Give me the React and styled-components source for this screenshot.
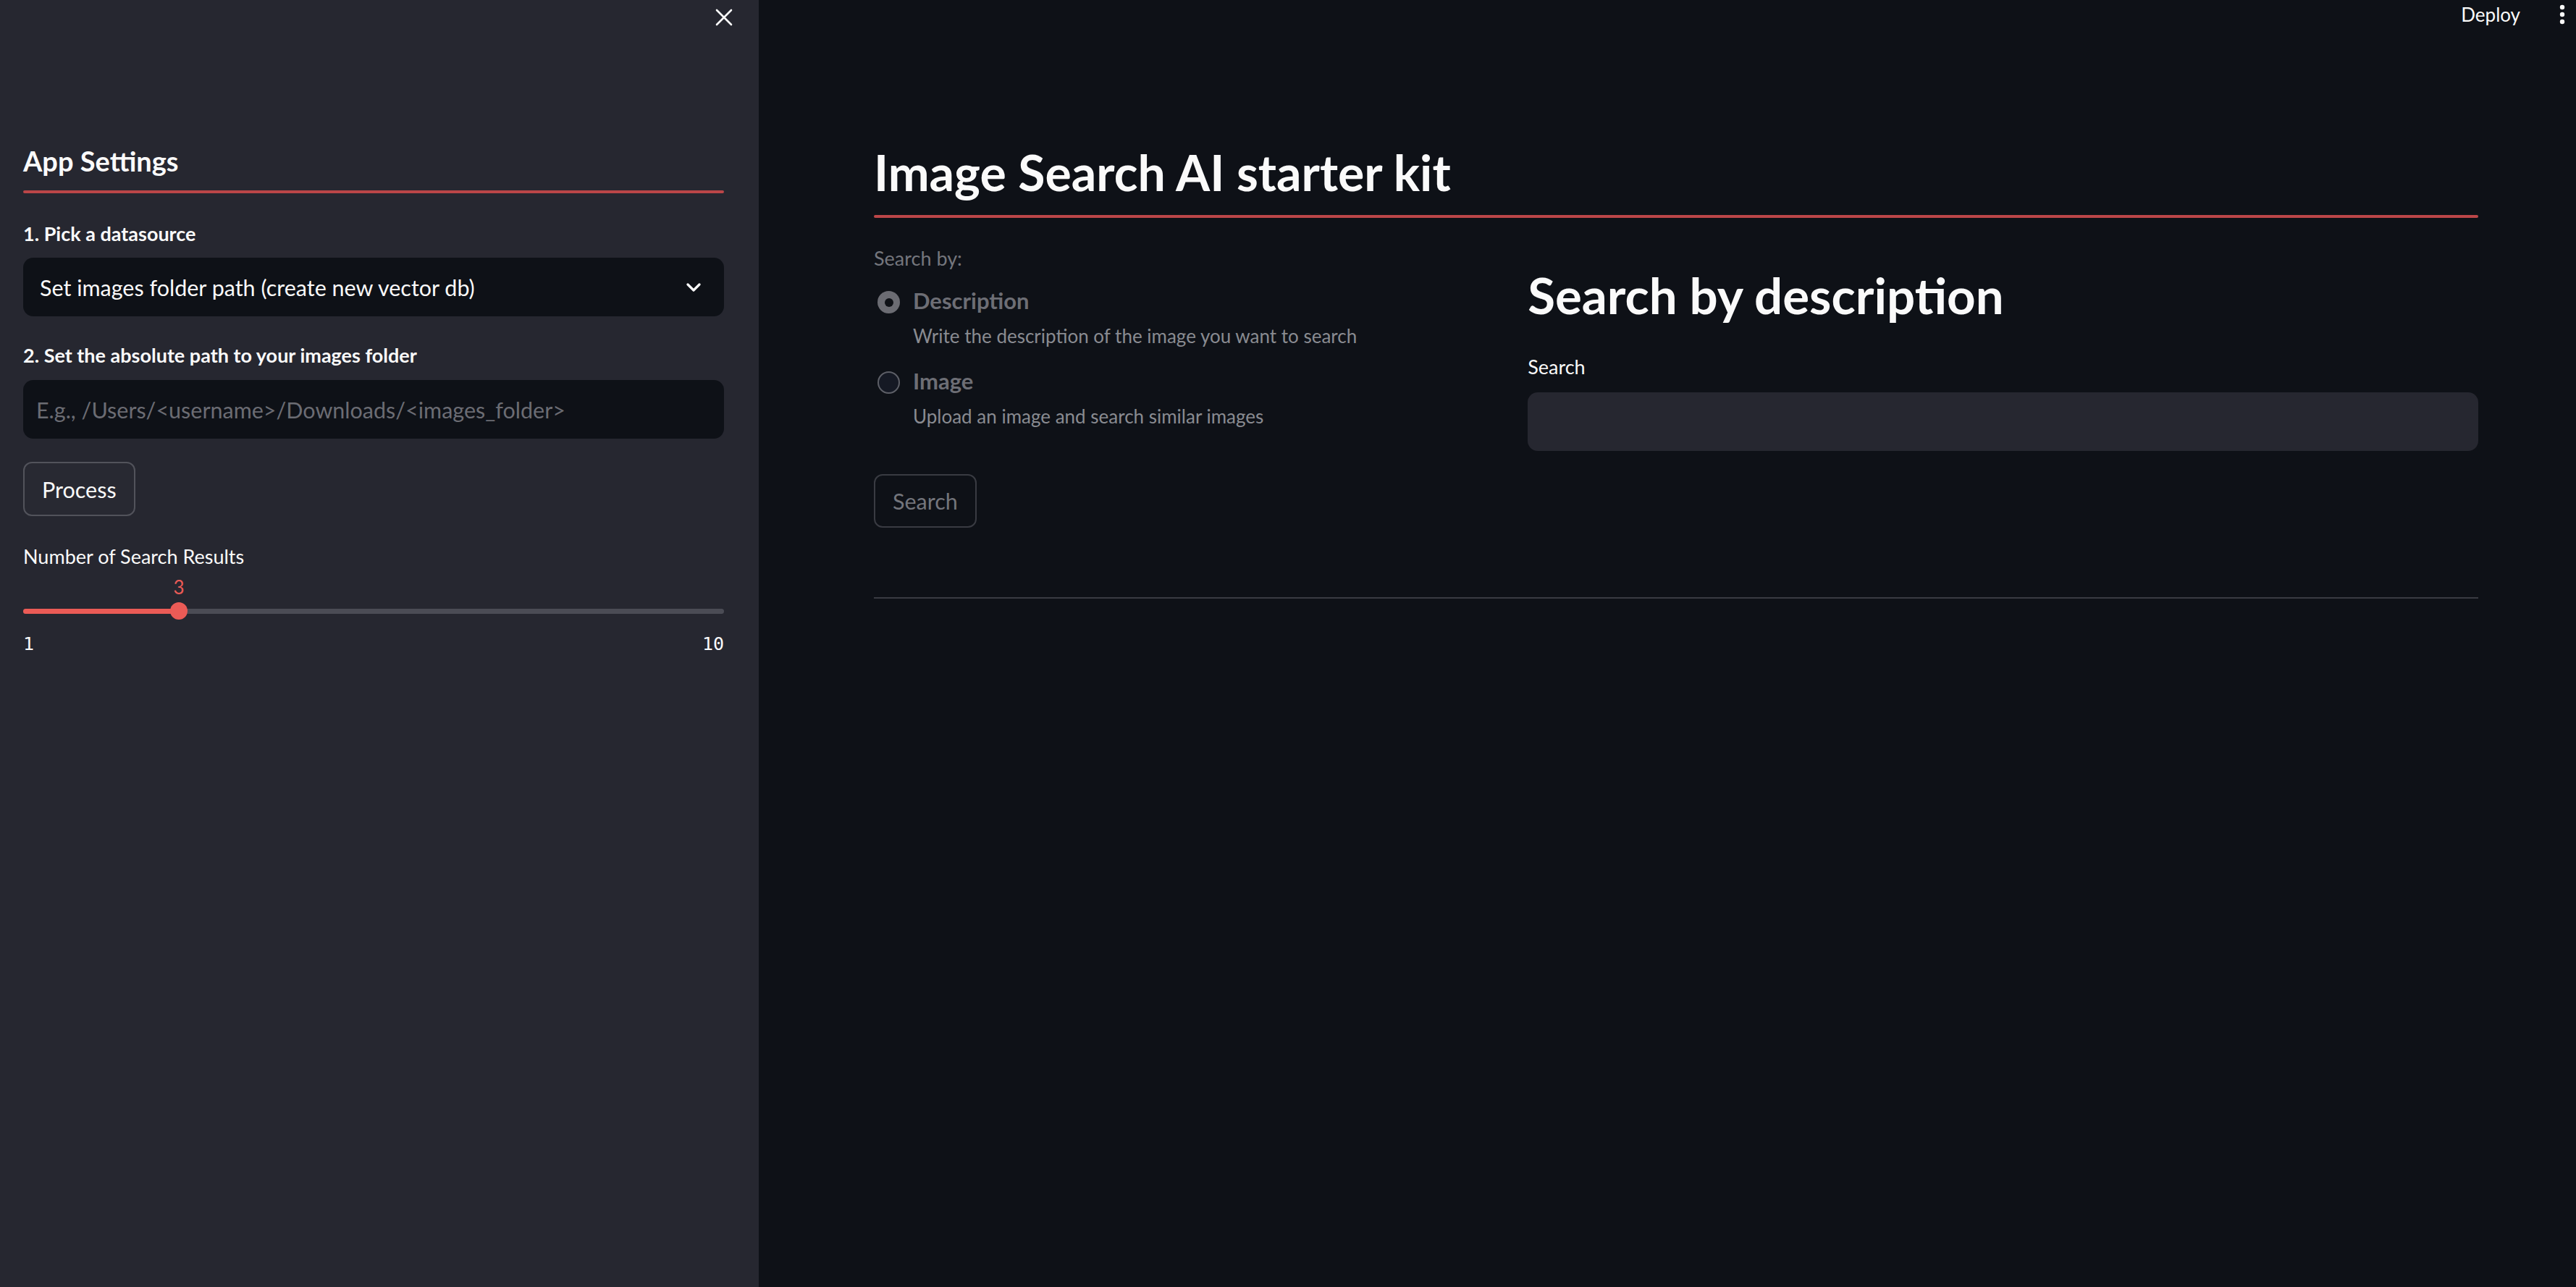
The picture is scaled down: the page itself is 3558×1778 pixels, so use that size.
import React from "react";
import styled, { createGlobalStyle } from "styled-components";

const GlobalStyle = createGlobalStyle`
  html, body {
    margin: 0;
    padding: 0;
    background: #0e1117;
  }
  body {
    font-family: Lato, "Noto Sans", sans-serif;
    color: #fafafa;
  }
  * {
    box-sizing: border-box;
  }
`;

const Layout = styled.div`
  display: flex;
  min-height: 100vh;
`;

const Sidebar = styled.aside`
  width: 1048px;
  flex-shrink: 0;
  background: #262730;
  padding: 0 48px 0 32px;
  display: flex;
  flex-direction: column;
`;

const SidebarTop = styled.div`
  height: 48px;
  display: flex;
  justify-content: flex-end;
  align-items: center;
  margin-right: -12px;
`;

const SideHeading = styled.h2`
  margin: 152px 0 0;
  font-size: 38px;
  line-height: 44px;
  font-weight: 700;
`;

const Divider = styled.div`
  height: 4px;
  border-radius: 2px;
  background: #bb4648;
  margin-top: ${(p) => p.$gap}px;
`;

const FieldLabel = styled.div`
  margin-top: ${(p) => p.$gap}px;
  font-size: 27px;
  line-height: 32px;
  font-weight: ${(p) => (p.$plain ? 400 : 700)};
  color: ${(p) => (p.$muted ? "#74767d" : "#fafafa")};
`;

const Field = styled.div`
  margin-top: ${(p) => p.$gap}px;
  height: 81px;
  border-radius: 14px;
  background: ${(p) => (p.$light ? "#262730" : "#0e1117")};
  display: flex;
  align-items: center;
  justify-content: space-between;
  padding: 0 32px 0 ${(p) => p.$pad || 18}px;
  font-size: 30.5px;
  color: ${(p) => (p.$placeholder ? "#6b6c73" : "#fafafa")};
`;

const Button = styled.button`
  margin-top: ${(p) => p.$gap}px;
  align-self: flex-start;
  height: ${(p) => p.$h}px;
  padding: 0 24px;
  border-radius: 12px;
  font-family: inherit;
  font-size: 30.5px;
  background: ${(p) => (p.$muted ? "#0e1117" : "#282932")};
  border: 2px solid ${(p) => (p.$muted ? "#393b42" : "#52535b")};
  color: ${(p) => (p.$muted ? "#73757c" : "#fafafa")};
`;

const SliderWrap = styled.div`
  margin-top: 10px;
`;

const ValueRow = styled.div`
  position: relative;
  height: 37px;
`;

const ThumbValue = styled.span`
  position: absolute;
  top: 0;
  transform: translateX(-50%);
  font-size: 26px;
  line-height: 32px;
  color: #eb5b56;
`;

const TrackArea = styled.div`
  height: 24px;
  display: flex;
  align-items: center;
`;

const Track = styled.div`
  position: relative;
  width: 100%;
  height: 7px;
  border-radius: 4px;
  background: #4b4c55;
`;

const Fill = styled.div`
  position: absolute;
  left: 0;
  top: 0;
  bottom: 0;
  border-radius: 4px;
  background: #eb5b56;
`;

const Thumb = styled.div`
  position: absolute;
  top: 50%;
  width: 24px;
  height: 24px;
  border-radius: 50%;
  background: #eb5b56;
  transform: translate(-50%, -50%);
`;

const Ticks = styled.div`
  display: flex;
  justify-content: space-between;
  margin-top: 19px;
  font-family: "DejaVu Sans Mono", "Liberation Mono", monospace;
  font-size: 25px;
  line-height: 30px;
`;

const Main = styled.main`
  flex: 1;
  display: flex;
  flex-direction: column;
`;

const TopBar = styled.div`
  height: 40px;
  display: flex;
  justify-content: flex-end;
  align-items: center;
  gap: 54px;
  padding-right: 15px;
  font-size: 26px;
`;

const Content = styled.div`
  padding: 0 135px 0 159px;
  display: flex;
  flex-direction: column;
`;

const Title = styled.h1`
  margin: 156px 0 0;
  font-size: 68px;
  line-height: 84px;
  font-weight: 700;
`;

const Columns = styled.div`
  display: grid;
  grid-template-columns: 2fr 3fr;
  column-gap: 28px;
  align-items: start;
`;

const Column = styled.div`
  display: flex;
  flex-direction: column;
  padding-top: ${(p) => p.$top}px;
`;

const Option = styled.div`
  display: flex;
  gap: 18px;
  margin-top: ${(p) => p.$gap}px;
`;

const RadioDot = styled.span`
  width: 31px;
  height: 31px;
  margin: 5px 0 0 5px;
  flex-shrink: 0;
  border-radius: 50%;
  display: flex;
  align-items: center;
  justify-content: center;
  background: ${(p) => (p.$checked ? "#6b6c73" : "#151924")};
  border: ${(p) => (p.$checked ? "none" : "2px solid #5d5f67")};
  &::after {
    content: "";
    width: 12px;
    height: 12px;
    border-radius: 50%;
    background: #0e1117;
    display: ${(p) => (p.$checked ? "block" : "none")};
  }
`;

const OptionName = styled.div`
  font-size: 31px;
  line-height: 36px;
  font-weight: 700;
  color: #6d6e75;
`;

const OptionHelp = styled.div`
  margin-top: 15px;
  font-size: 26px;
  line-height: 32px;
  color: #898b91;
`;

const SubTitle = styled.h2`
  margin: 0;
  font-size: 69px;
  line-height: 84px;
  font-weight: 700;
`;

const Rule = styled.hr`
  margin: 96px 0 0;
  border: none;
  height: 2px;
  background: #393b42;
`;

function CloseIcon() {
  return (
    <svg width="24" height="24" viewBox="0 0 24 24">
      <path d="M2 2L22 22M22 2L2 22" stroke="#fafafa" strokeWidth="2.6" strokeLinecap="round" />
    </svg>
  );
}

function Chevron() {
  return (
    <svg width="20" height="12" viewBox="0 0 20 12">
      <path d="M2 2L10 10L18 2" stroke="#fafafa" strokeWidth="3.2" fill="none" strokeLinecap="round" strokeLinejoin="round" />
    </svg>
  );
}

function Kebab() {
  return (
    <svg width="8" height="32" viewBox="0 0 8 32">
      <circle cx="4" cy="6" r="3.2" fill="#fafafa" />
      <circle cx="4" cy="16" r="3.2" fill="#fafafa" />
      <circle cx="4" cy="26" r="3.2" fill="#fafafa" />
    </svg>
  );
}

function Slider({ min, max, value }) {
  const pct = ((value - min) / (max - min)) * 100;
  return (
    <SliderWrap>
      <ValueRow>
        <ThumbValue style={{ left: `${pct}%` }}>{value}</ThumbValue>
      </ValueRow>
      <TrackArea>
        <Track>
          <Fill style={{ width: `${pct}%` }} />
          <Thumb style={{ left: `${pct}%` }} />
        </Track>
      </TrackArea>
      <Ticks>
        <span>{min}</span>
        <span>{max}</span>
      </Ticks>
    </SliderWrap>
  );
}

const searchOptions = [
  { name: "Description", help: "Write the description of the image you want to search", checked: true },
  { name: "Image", help: "Upload an image and search similar images", checked: false },
];

export default function App() {
  return (
    <>
      <GlobalStyle />
      <Layout>
        <Sidebar>
          <SidebarTop>
            <CloseIcon />
          </SidebarTop>
          <SideHeading>App Settings</SideHeading>
          <Divider $gap={19} />
          <FieldLabel $gap={40}>1. Pick a datasource</FieldLabel>
          <Field $gap={17} $pad={23}>
            <span>Set images folder path (create new vector db)</span>
            <Chevron />
          </Field>
          <FieldLabel $gap={38}>2. Set the absolute path to your images folder</FieldLabel>
          <Field $gap={18} $placeholder>
            E.g., /Users/&lt;username&gt;/Downloads/&lt;images_folder&gt;
          </Field>
          <Button $gap={32} $h={75}>Process</Button>
          <FieldLabel $gap={40} $plain>Number of Search Results</FieldLabel>
          <Slider min={1} max={10} value={3} />
        </Sidebar>
        <Main>
          <TopBar>
            <span>Deploy</span>
            <Kebab />
          </TopBar>
          <Content>
            <Title>Image Search AI starter kit</Title>
            <Divider $gap={17} />
            <Columns>
              <Column $top={40}>
                <FieldLabel $gap={0} $plain $muted>Search by:</FieldLabel>
                {searchOptions.map((o, i) => (
                  <Option key={o.name} $gap={i === 0 ? 24 : 28}>
                    <RadioDot $checked={o.checked} />
                    <div>
                      <OptionName>{o.name}</OptionName>
                      <OptionHelp>{o.help}</OptionHelp>
                    </div>
                  </Option>
                ))}
                <Button $gap={64} $h={74} $muted>Search</Button>
              </Column>
              <Column $top={65}>
                <SubTitle>Search by description</SubTitle>
                <FieldLabel $gap={41} $plain>Search</FieldLabel>
                <Field $gap={19} $light />
              </Column>
            </Columns>
            <Rule />
          </Content>
        </Main>
      </Layout>
    </>
  );
}
